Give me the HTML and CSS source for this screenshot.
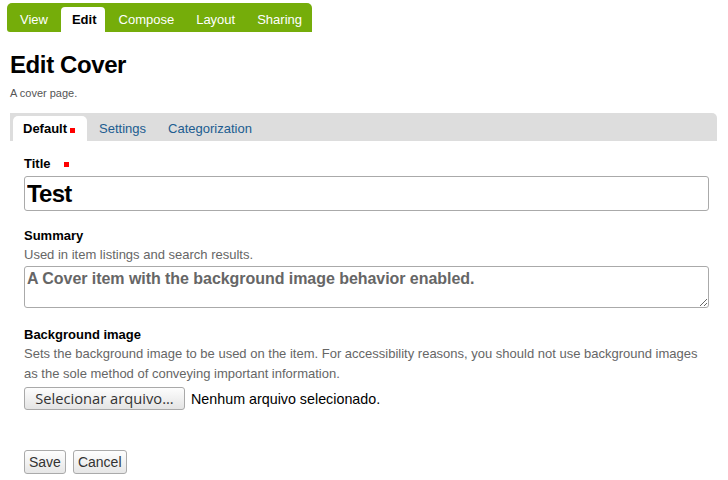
FILE: index.html
```html
<!DOCTYPE html>
<html>
<head>
<meta charset="utf-8">
<title>Edit Cover</title>
<link rel="stylesheet" href="styles.css">
</head>
<body>
<div class="page">
  <nav class="views">
    <a class="view-tab tab-view">View</a>
    <a class="view-tab active">Edit</a>
    <a class="view-tab tab-compose">Compose</a>
    <a class="view-tab">Layout</a>
    <a class="view-tab tab-sharing">Sharing</a>
  </nav>
  <h1 class="title">Edit Cover</h1>
  <p class="doc-desc">A cover page.</p>
  <div class="formtabs">
    <a class="formtab selected">Default<span class="req-mark"></span></a>
    <a class="formtab tab-settings">Settings</a>
    <a class="formtab">Categorization</a>
  </div>
  <form class="fields">
    <div class="field field-title">
      <label class="field-label">Title<span class="req-mark req-title"></span></label>
      <input class="title-input" type="text" value="Test">
    </div>
    <div class="field field-summary">
      <label class="field-label">Summary</label>
      <div class="help">Used in item listings and search results.</div>
      <textarea class="summary-input">A Cover item with the background image behavior enabled.</textarea>
    </div>
    <div class="field field-bg">
      <label class="field-label">Background image</label>
      <div class="help help-long">Sets the background image to be used on the item. For accessibility reasons, you should not use background images as the sole method of conveying important information.</div>
      <div class="file-row">
        <button type="button" class="file-btn">Selecionar arquivo...</button>
        <span class="file-status">Nenhum arquivo selecionado.</span>
      </div>
    </div>
    <div class="actions">
      <button type="button" class="btn">Save</button>
      <button type="button" class="btn">Cancel</button>
    </div>
  </form>
</div>
</body>
</html>
```
FILE: styles.css
```css
html, body {
  margin: 0;
  padding: 0;
  background: #fff;
}
body {
  font-family: "Liberation Sans", Arial, sans-serif;
  color: #000;
}
.page {
  padding: 3px 11px 0 10px;
}
.views {
  display: inline-flex;
  align-items: flex-end;
  height: 29px;
  margin-left: -3px;
  background: #75ad0a;
  border-radius: 5px 5px 0 3px;
}
.view-tab {
  display: block;
  height: 25px;
  line-height: 25px;
  padding: 0 11px;
  font-size: 13px;
  color: #fff;
}
.view-tab.tab-view {
  padding: 0 13px;
}
.view-tab.tab-compose {
  padding: 0 11px 0 14px;
}
.view-tab.tab-sharing {
  padding: 0 10px 0 11px;
}
.view-tab.active {
  background: #fff;
  color: #000;
  font-weight: bold;
  border-radius: 4px 4px 0 0;
  padding: 0 8px 0 11px;
}
.title {
  margin: 18px 0 0 0;
  font-size: 24px;
  line-height: 29px;
  font-weight: bold;
  letter-spacing: -0.4px;
}
.doc-desc {
  margin: 6px 0 0 0;
  font-size: 11px;
  line-height: 17px;
  color: #555;
}
.formtabs {
  display: flex;
  align-items: flex-end;
  height: 28px;
  margin-top: 11px;
  padding-left: 3px;
  background: #dddddd;
  border-radius: 0 5px 0 0;
}
.formtab {
  display: block;
  height: 25px;
  line-height: 25px;
  padding: 0 12px;
  font-size: 13px;
  color: #205c90;
}
.formtab.tab-settings {
  padding: 0 10px 0 12px;
}
.formtab.selected {
  background: #fff;
  color: #000;
  font-weight: bold;
  border-radius: 5px 5px 0 0;
  padding: 0 12px 0 10px;
}
.req-mark {
  display: inline-block;
  width: 5px;
  height: 5px;
  margin-left: 3px;
  background: #f00;
  vertical-align: 0;
}
.req-title {
  margin-left: 13px;
  vertical-align: 1px;
}
.fields {
  padding: 0 8px 0 14px;
}
.field {
  display: flex;
  flex-direction: column;
  align-items: stretch;
}
.field-title {
  margin-top: 15px;
}
.field-summary {
  margin-top: 17px;
}
.field-bg {
  margin-top: 19px;
}
.field-label {
  font-size: 13px;
  line-height: 16px;
  font-weight: bold;
}
.help {
  font-size: 13px;
  line-height: 19px;
  color: #666;
  margin-top: 1px;
}
.help-long {
  line-height: 20px;
}
.title-input {
  margin: 4px 0 0 0;
  height: 35px;
  box-sizing: border-box;
  border: 1px solid #aaa;
  border-radius: 3px;
  padding: 0 2px;
  font-family: "Liberation Sans", Arial, sans-serif;
  font-size: 24px;
  font-weight: bold;
  letter-spacing: -0.8px;
  color: #000;
  background: #fff;
  outline: none;
}
.summary-input {
  margin: 2px 0 0 0;
  height: 42px;
  box-sizing: border-box;
  border: 1px solid #aaa;
  border-radius: 3px;
  padding: 3px 2px 0 2px;
  font-family: "Liberation Sans", Arial, sans-serif;
  font-size: 16px;
  font-weight: bold;
  letter-spacing: -0.05px;
  color: #666;
  background: #fff;
  resize: vertical;
  outline: none;
}
.file-row {
  display: flex;
  align-items: center;
  gap: 6px;
  margin-top: 3px;
}
.file-btn {
  height: 23px;
  width: 161px;
  box-sizing: border-box;
  padding: 0 4px;
  border: 1px solid #a9a9a9;
  border-radius: 3px;
  background: linear-gradient(#fdfdfd, #e4e4e4);
  font-family: "Open Sans", "DejaVu Sans", sans-serif;
  font-size: 14.7px;
  color: #333;
  line-height: 21px;
}
.file-status {
  font-size: 14.3px;
  color: #000;
}
.actions {
  display: flex;
  gap: 7px;
  margin-top: 40px;
}
.btn {
  height: 24px;
  box-sizing: border-box;
  padding: 0 4px;
  border: 1px solid #aaa;
  border-radius: 3px;
  background: linear-gradient(#fefefe, #e6e6e6);
  font-family: "Liberation Sans", Arial, sans-serif;
  font-size: 14px;
  color: #333;
}
```
